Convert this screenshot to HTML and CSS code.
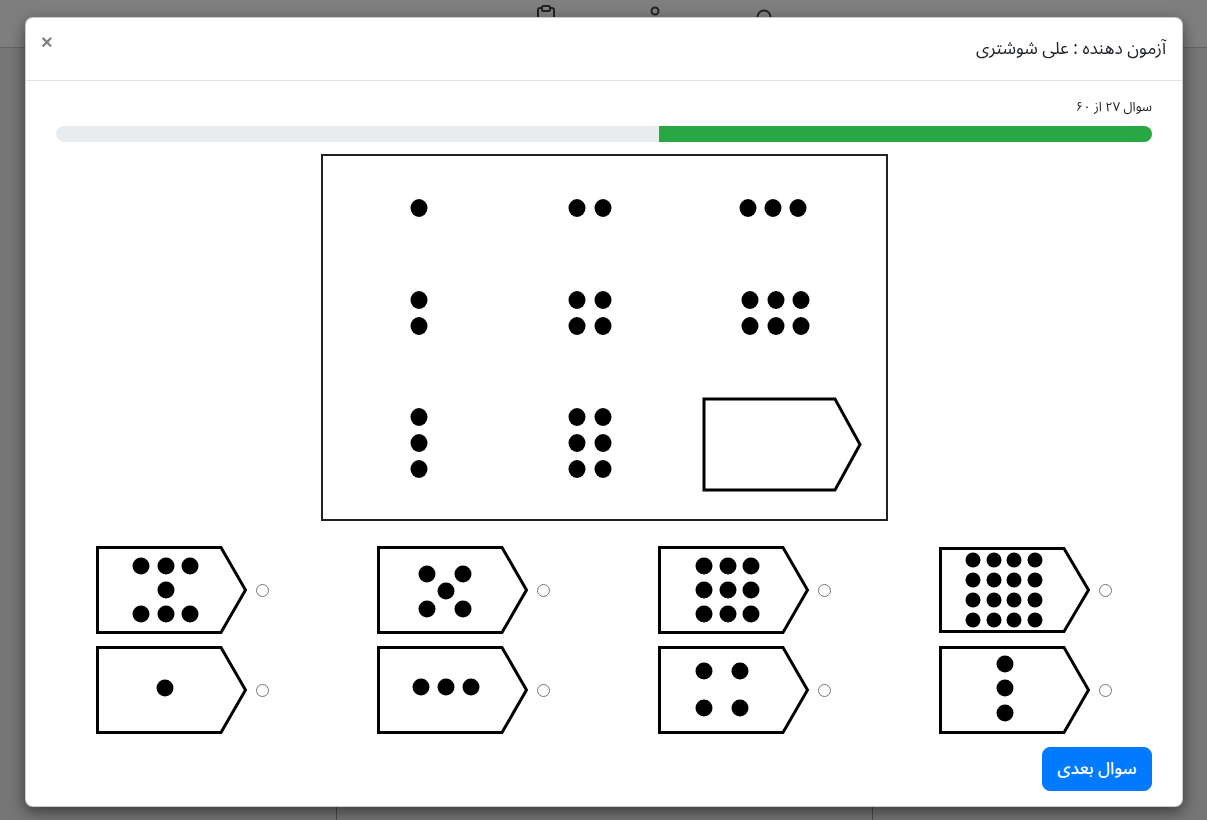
FILE: index.html
```html
<!DOCTYPE html>
<html lang="fa">
<head>
<meta charset="utf-8">
<title>آزمون</title>
<link rel="stylesheet" href="styles.css">
</head>
<body>
<div class="page">
  <nav class="navbar">
    <span class="nav-icon">
      <svg width="20" height="24" viewBox="0 0 20 24"><rect x="2" y="3" width="16" height="19" rx="2" fill="none" stroke="#444" stroke-width="2"/><rect x="6" y="1" width="8" height="5" rx="1.5" fill="#fff" stroke="#444" stroke-width="2"/></svg>
    </span>
    <span class="nav-icon">
      <svg width="20" height="24" viewBox="0 0 20 24"><circle cx="10" cy="6" r="3.5" fill="none" stroke="#444" stroke-width="2"/><path d="M3 20c0-4 3-7 7-7s7 3 7 7" fill="none" stroke="#444" stroke-width="2"/></svg>
    </span>
    <span class="nav-icon">
      <svg width="20" height="24" viewBox="0 0 20 24"><circle cx="10" cy="12" r="6.5" fill="none" stroke="#444" stroke-width="2"/></svg>
    </span>
  </nav>
  <div class="page-cols">
    <div class="pc pc1"></div>
    <div class="pc pc2"></div>
    <div class="pc pc3"></div>
  </div>
</div>
<div class="backdrop"></div>

<div class="modal" dir="rtl">
  <div class="modal-header">
    <h5 class="modal-title">آزمون دهنده : علی شوشتری</h5>
    <button class="close" type="button">×</button>
  </div>
  <div class="modal-body">
    <div class="q-count">سوال ۲۷ از ۶۰</div>
    <div class="progress"><div class="progress-bar" style="width:45%"></div></div>

    <div class="figure">
      <svg width="567" height="367" viewBox="0 0 567 367">
        <rect x="1" y="1" width="565" height="365" fill="#fff" stroke="#222" stroke-width="2"/>
        <g fill="#000">
          <ellipse cx="98" cy="54" rx="8.5" ry="9"/>
          <ellipse cx="256" cy="54" rx="8.5" ry="9"/><ellipse cx="282" cy="54" rx="8.5" ry="9"/>
          <ellipse cx="427" cy="54" rx="8.5" ry="9"/><ellipse cx="452" cy="54" rx="8.5" ry="9"/><ellipse cx="477" cy="54" rx="8.5" ry="9"/>

          <ellipse cx="98" cy="146" rx="8.5" ry="9"/><ellipse cx="98" cy="172" rx="8.5" ry="9"/>
          <ellipse cx="256" cy="146" rx="8.5" ry="9"/><ellipse cx="282" cy="146" rx="8.5" ry="9"/>
          <ellipse cx="256" cy="172" rx="8.5" ry="9"/><ellipse cx="282" cy="172" rx="8.5" ry="9"/>
          <ellipse cx="429" cy="146" rx="8.5" ry="9"/><ellipse cx="455" cy="146" rx="8.5" ry="9"/><ellipse cx="480" cy="146" rx="8.5" ry="9"/>
          <ellipse cx="429" cy="172" rx="8.5" ry="9"/><ellipse cx="455" cy="172" rx="8.5" ry="9"/><ellipse cx="480" cy="172" rx="8.5" ry="9"/>

          <ellipse cx="98" cy="263" rx="8.5" ry="9"/><ellipse cx="98" cy="289" rx="8.5" ry="9"/><ellipse cx="98" cy="315" rx="8.5" ry="9"/>
          <ellipse cx="256" cy="263" rx="8.5" ry="9"/><ellipse cx="282" cy="263" rx="8.5" ry="9"/>
          <ellipse cx="256" cy="289" rx="8.5" ry="9"/><ellipse cx="282" cy="289" rx="8.5" ry="9"/>
          <ellipse cx="256" cy="315" rx="8.5" ry="9"/><ellipse cx="282" cy="315" rx="8.5" ry="9"/>
        </g>
        <polygon points="383,245 514,245 539,290.5 514,336 383,336" fill="none" stroke="#000" stroke-width="3"/>
      </svg>
    </div>

    <div class="options">
      <!-- row 1 (right to left) -->
      <label class="opt">
        <input type="radio" name="ans" value="1">
        <svg class="tag" width="152" height="86" viewBox="0 0 152 86">
          <polygon points="1.5,1.5 125,1.5 149.5,43 125,84.5 1.5,84.5" fill="#fff" stroke="#000" stroke-width="3"/>
          <g fill="#000">
            <circle cx="34" cy="13" r="7.5"/><circle cx="55" cy="13" r="7.5"/><circle cx="75" cy="13" r="7.5"/><circle cx="96" cy="13" r="7.5"/>
            <circle cx="34" cy="33" r="7.5"/><circle cx="55" cy="33" r="7.5"/><circle cx="75" cy="33" r="7.5"/><circle cx="96" cy="33" r="7.5"/>
            <circle cx="34" cy="53" r="7.5"/><circle cx="55" cy="53" r="7.5"/><circle cx="75" cy="53" r="7.5"/><circle cx="96" cy="53" r="7.5"/>
            <circle cx="34" cy="73" r="7.5"/><circle cx="55" cy="73" r="7.5"/><circle cx="75" cy="73" r="7.5"/><circle cx="96" cy="73" r="7.5"/>
          </g>
        </svg>
      </label>
      <label class="opt">
        <input type="radio" name="ans" value="2">
        <svg class="tag" width="152" height="88" viewBox="0 0 152 88">
          <polygon points="1.5,1.5 125,1.5 149.5,44 125,86.5 1.5,86.5" fill="#fff" stroke="#000" stroke-width="3"/>
          <g fill="#000">
            <circle cx="46" cy="20" r="8.5"/><circle cx="70" cy="20" r="8.5"/><circle cx="93" cy="20" r="8.5"/>
            <circle cx="46" cy="44" r="8.5"/><circle cx="70" cy="44" r="8.5"/><circle cx="93" cy="44" r="8.5"/>
            <circle cx="46" cy="68" r="8.5"/><circle cx="70" cy="68" r="8.5"/><circle cx="93" cy="68" r="8.5"/>
          </g>
        </svg>
      </label>
      <label class="opt">
        <input type="radio" name="ans" value="3">
        <svg class="tag" width="152" height="88" viewBox="0 0 152 88">
          <polygon points="1.5,1.5 125,1.5 149.5,44 125,86.5 1.5,86.5" fill="#fff" stroke="#000" stroke-width="3"/>
          <g fill="#000">
            <circle cx="50" cy="28" r="8.5"/><circle cx="86" cy="28" r="8.5"/>
            <circle cx="69" cy="45" r="8.5"/>
            <circle cx="50" cy="63" r="8.5"/><circle cx="86" cy="63" r="8.5"/>
          </g>
        </svg>
      </label>
      <label class="opt">
        <input type="radio" name="ans" value="4">
        <svg class="tag" width="152" height="88" viewBox="0 0 152 88">
          <polygon points="1.5,1.5 125,1.5 149.5,44 125,86.5 1.5,86.5" fill="#fff" stroke="#000" stroke-width="3"/>
          <g fill="#000">
            <circle cx="45" cy="20" r="8.5"/><circle cx="70" cy="20" r="8.5"/><circle cx="94" cy="20" r="8.5"/>
            <circle cx="70" cy="44" r="8.5"/>
            <circle cx="45" cy="68" r="8.5"/><circle cx="70" cy="68" r="8.5"/><circle cx="94" cy="68" r="8.5"/>
          </g>
        </svg>
      </label>

      <!-- row 2 (right to left) -->
      <label class="opt">
        <input type="radio" name="ans" value="5">
        <svg class="tag" width="152" height="88" viewBox="0 0 152 88">
          <polygon points="1.5,1.5 125,1.5 149.5,44 125,86.5 1.5,86.5" fill="#fff" stroke="#000" stroke-width="3"/>
          <g fill="#000">
            <circle cx="66" cy="18" r="8.5"/><circle cx="66" cy="42" r="8.5"/><circle cx="66" cy="67" r="8.5"/>
          </g>
        </svg>
      </label>
      <label class="opt">
        <input type="radio" name="ans" value="6">
        <svg class="tag" width="152" height="88" viewBox="0 0 152 88">
          <polygon points="1.5,1.5 125,1.5 149.5,44 125,86.5 1.5,86.5" fill="#fff" stroke="#000" stroke-width="3"/>
          <g fill="#000">
            <circle cx="46" cy="25" r="8.5"/><circle cx="82" cy="25" r="8.5"/>
            <circle cx="46" cy="62" r="8.5"/><circle cx="82" cy="62" r="8.5"/>
          </g>
        </svg>
      </label>
      <label class="opt">
        <input type="radio" name="ans" value="7">
        <svg class="tag" width="152" height="88" viewBox="0 0 152 88">
          <polygon points="1.5,1.5 125,1.5 149.5,44 125,86.5 1.5,86.5" fill="#fff" stroke="#000" stroke-width="3"/>
          <g fill="#000">
            <circle cx="44" cy="41" r="8.5"/><circle cx="69" cy="41" r="8.5"/><circle cx="94" cy="41" r="8.5"/>
          </g>
        </svg>
      </label>
      <label class="opt">
        <input type="radio" name="ans" value="8">
        <svg class="tag" width="152" height="88" viewBox="0 0 152 88">
          <polygon points="1.5,1.5 125,1.5 149.5,44 125,86.5 1.5,86.5" fill="#fff" stroke="#000" stroke-width="3"/>
          <g fill="#000">
            <circle cx="69" cy="42" r="8.5"/>
          </g>
        </svg>
      </label>
    </div>

    <div class="actions">
      <button class="btn-next" type="button">سوال بعدی</button>
    </div>
  </div>
</div>
</body>
</html>
```

FILE: styles.css
```css
* { box-sizing: border-box; }

html, body {
  margin: 0;
  padding: 0;
  height: 100%;
}

body {
  font-family: "Noto Sans Arabic", "Noto Sans", sans-serif;
  background: #ececec;
  color: #212529;
  overflow: hidden;
}

.page {
  height: 100%;
  display: flex;
  flex-direction: column;
}

.navbar {
  height: 48px;
  flex: none;
  background: #fff;
  border-bottom: 1px solid #c8c8c8;
  display: flex;
  align-items: flex-start;
  padding: 5px 0 0 536px;
  gap: 89px;
}

.nav-icon { display: block; width: 20px; height: 24px; }

.page-cols {
  flex: 1;
  display: flex;
}

.pc { height: 100%; }
.pc1 { width: 336px; }
.pc2 { width: 537px; border-left: 1px solid #9a9a9a; border-right: 1px solid #9a9a9a; }
.pc3 { flex: 1; }

.backdrop {
  position: fixed;
  inset: 0;
  background: rgba(0, 0, 0, 0.5);
}

.modal {
  position: absolute;
  top: 17px;
  left: 25px;
  width: 1158px;
  background: #fff;
  border: 1px solid rgba(0, 0, 0, 0.2);
  border-radius: 8px;
  box-shadow: 0 5px 15px rgba(0, 0, 0, 0.5);
  direction: rtl;
}

.modal-header {
  display: flex;
  align-items: flex-start;
  justify-content: space-between;
  padding: 16px;
  border-bottom: 1px solid #dee2e6;
}

.modal-title {
  margin: 0;
  font-size: 17.3px;
  line-height: 30px;
  font-weight: 400;
  color: #212529;
}

.close {
  background: none;
  border: 0;
  padding: 0;
  margin: -4px 0 0 -1px;
  font-family: "Liberation Sans", sans-serif;
  font-size: 20px;
  line-height: 24px;
  font-weight: 700;
  color: #000;
  opacity: 0.5;
  cursor: pointer;
}

.modal-body {
  padding: 16px 30px 15px;
}

.q-count {
  font-size: 13px;
  line-height: 21px;
}

.progress {
  margin-top: 8px;
  height: 16px;
  background: #e9ecef;
  border-radius: 8px;
  overflow: hidden;
  display: flex;
}

.progress-bar {
  height: 100%;
  background: #28a745;
}

.figure {
  margin-top: 12px;
  display: flex;
  justify-content: center;
}

.figure svg { display: block; }

.options {
  margin-top: 25px;
  margin-right: 40px;
  display: grid;
  grid-template-columns: 281px 281px 281px 1fr;
  grid-auto-rows: 88px;
  row-gap: 12px;
}

.opt {
  display: flex;
  align-items: center;
  gap: 8px;
  cursor: pointer;
}

.opt input {
  margin: 0;
  width: 13px;
  height: 13px;
  flex: none;
}

.tag { display: block; flex: none; }

.actions {
  margin-top: 13px;
  display: flex;
  justify-content: flex-start;
}

.btn-next {
  height: 44px;
  width: 110px;
  padding: 0;
  border: 1px solid #007bff;
  background: #007bff;
  color: #fff;
  border-radius: 8px;
  font-family: inherit;
  font-size: 17px;
  font-weight: 500;
  white-space: nowrap;
  cursor: pointer;
}
```
